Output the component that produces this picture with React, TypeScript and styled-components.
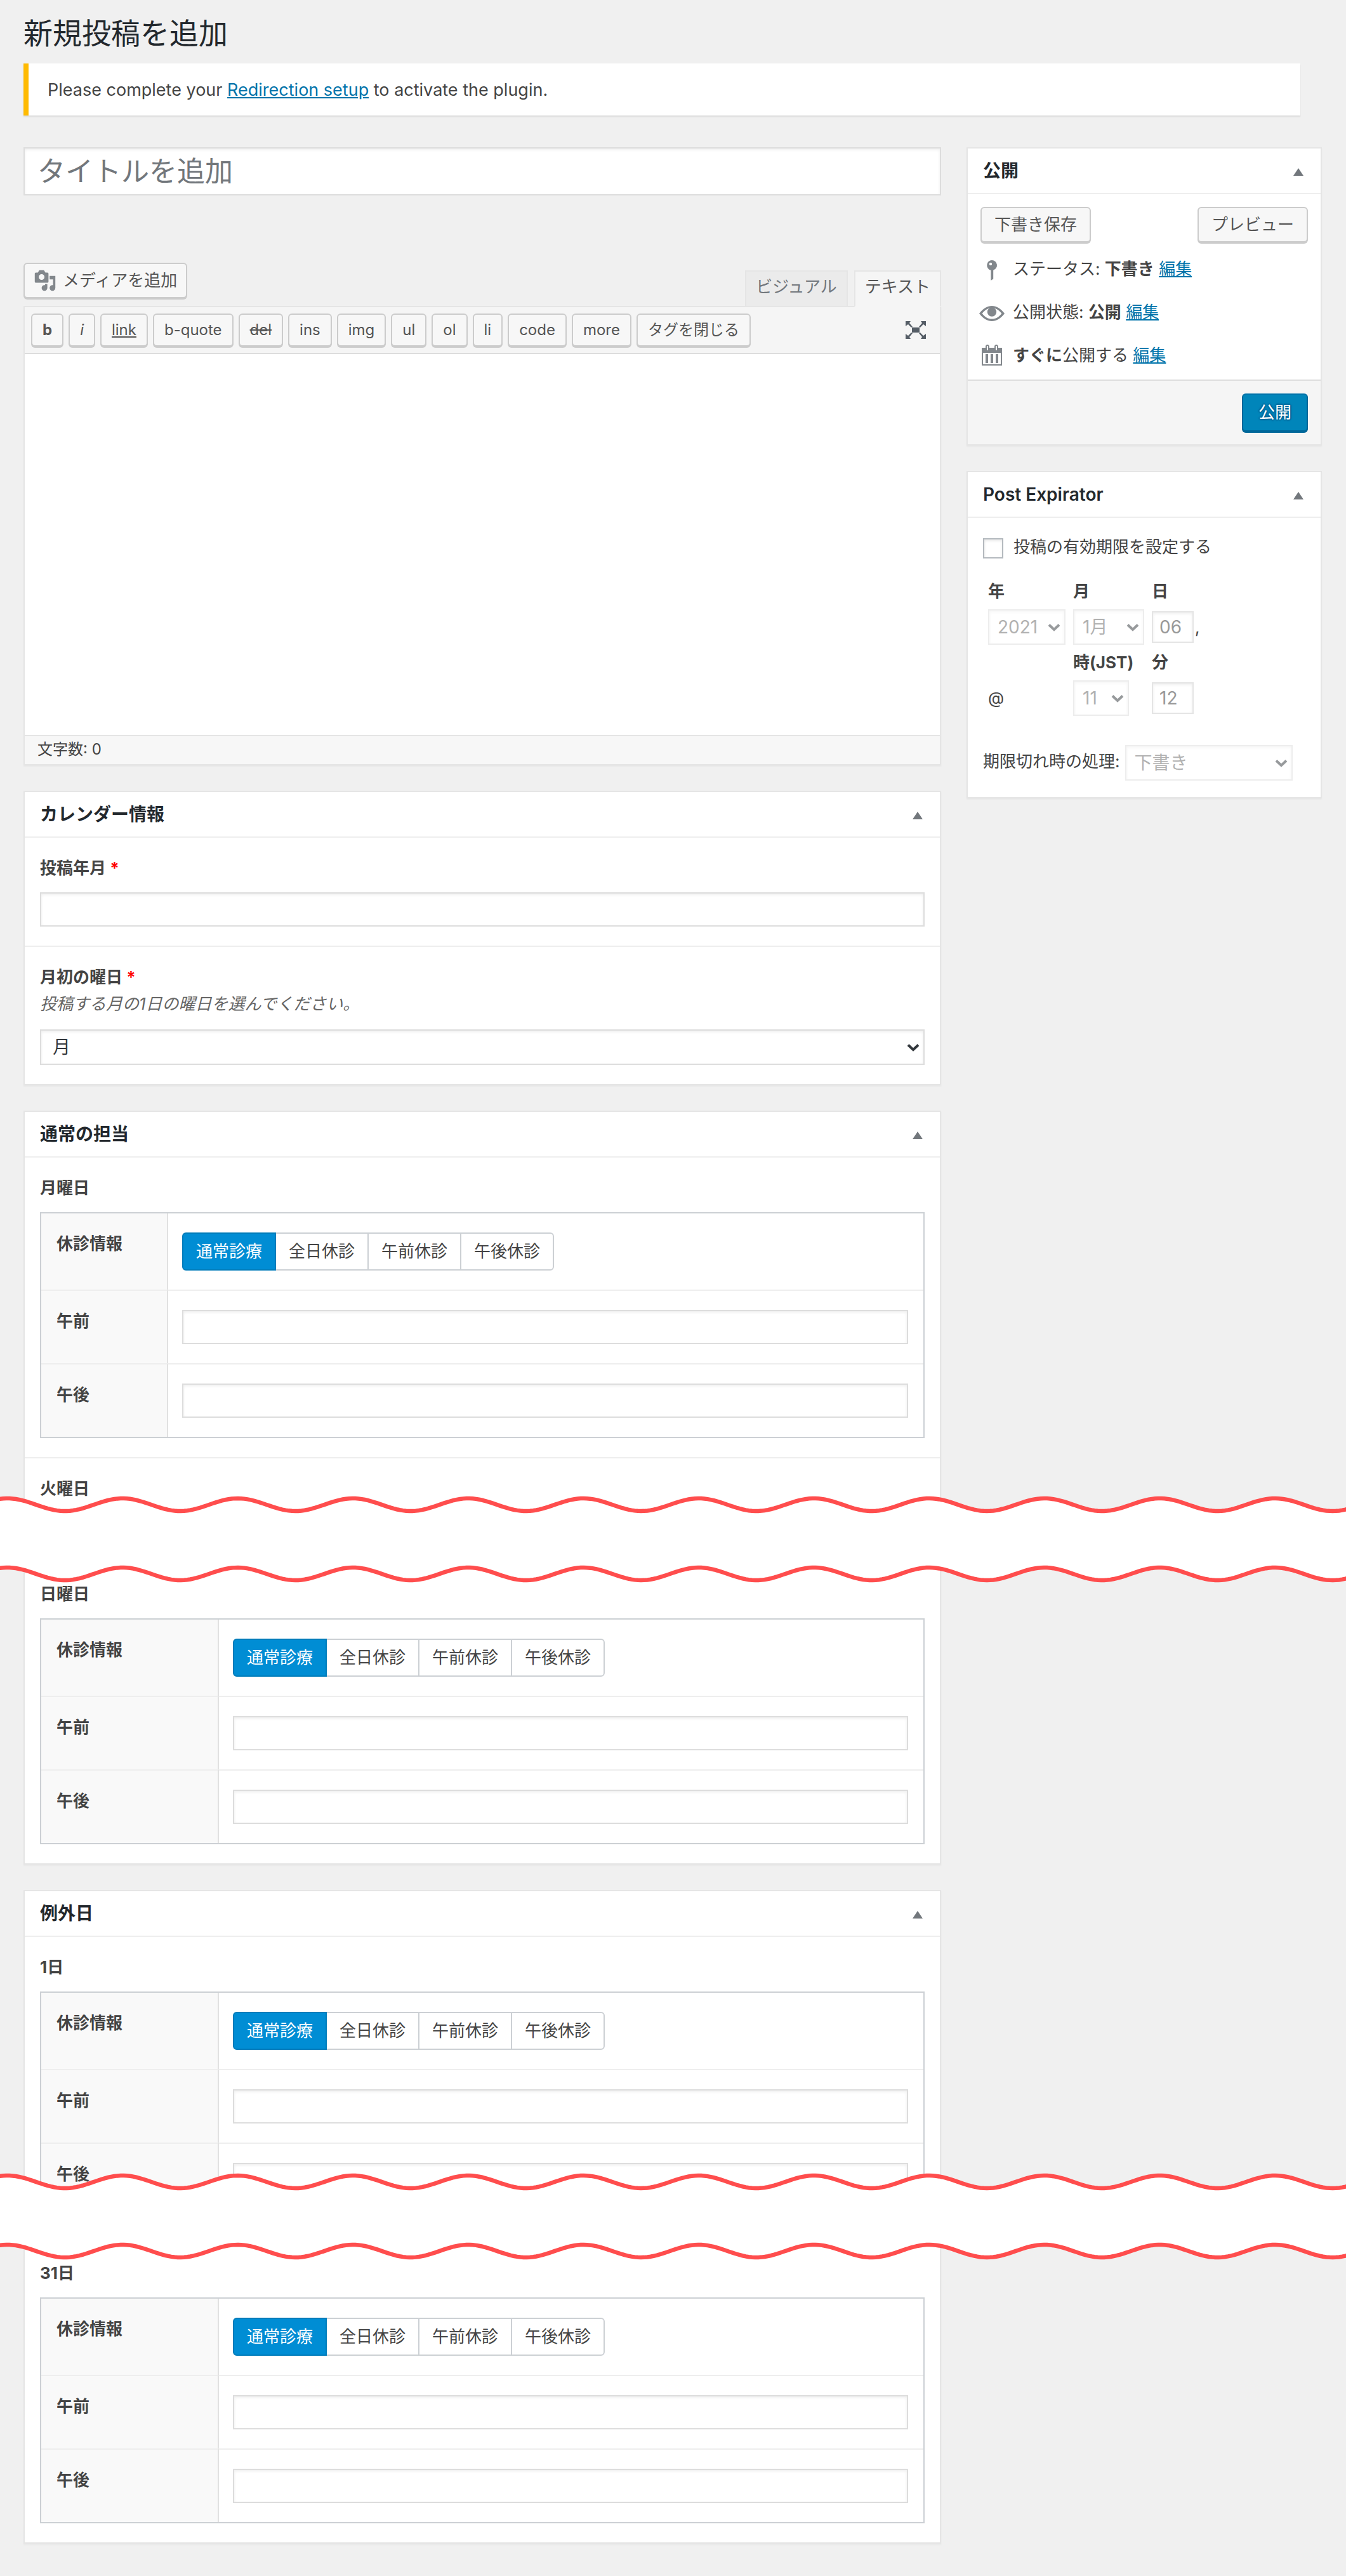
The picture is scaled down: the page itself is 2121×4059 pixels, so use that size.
import React, { useId } from 'react';
import styled, { createGlobalStyle, css } from 'styled-components';

const GlobalStyle = createGlobalStyle`
  *, *::before, *::after { box-sizing: border-box; }
  body {
    margin: 0;
    background: #f0f0f0;
    color: #444;
    font: 26px/36px Inter, "Noto Sans CJK JP", sans-serif;
  }
  input, select, button, textarea { font-family: inherit; margin: 0; }
`;

const Page = styled.div`
  overflow: hidden;
  padding-bottom: 51px;
`;

const Slice = styled.div`
  padding: 0 38px 0 37px;
`;

const Columns = styled.div`
  display: grid;
  grid-template-columns: minmax(0, 1fr) 560px;
  gap: 40px;
  align-items: start;
`;

const Heading = styled.h1`
  margin: 0;
  padding: 22px 0 18px;
  font-size: 46px;
  line-height: 60px;
  font-weight: 400;
  color: #23282d;
`;

const Notice = styled.div`
  margin: 0 34px 50px 0;
  padding: 24px 30px 22px;
  border-left: 8px solid #ffba00;
  background: #fff;
  box-shadow: 0 2px 2px rgba(0, 0, 0, 0.1);
  font-size: 27px;
`;

const Link = styled.a`
  color: #0073aa;
  text-decoration: underline;
`;

const fieldFrame = css`
  border: 2px solid #ddd;
  border-radius: 0;
  background: #fff;
  box-shadow: inset 0 2px 4px rgba(0, 0, 0, 0.07);
  color: #32373c;
`;

const TitleInput = styled.input`
  ${fieldFrame}
  display: block;
  width: 100%;
  height: 76px;
  padding: 0 20px;
  font-size: 44px;
  &::placeholder { color: #72777c; opacity: 1; }
`;

const TextInput = styled.input`
  ${fieldFrame}
  display: block;
  width: 100%;
  height: 54px;
  padding: 0 14px;
  font-size: 28px;
`;

const EditorTools = styled.div`
  display: flex;
  justify-content: space-between;
  align-items: flex-start;
  margin-top: 106px;
`;

const Button = styled.button<{ $primary?: boolean }>`
  height: 56px;
  padding: 0 20px;
  border: 2px solid #ccc;
  border-radius: 6px;
  background: #f7f7f7;
  box-shadow: 0 2px 0 #ccc;
  color: #555;
  font-size: 26px;
  line-height: 50px;
  white-space: nowrap;
  ${(p) =>
    p.$primary &&
    css`
      height: 60px;
      padding: 0 24px;
      border-color: #0073aa #006799 #006799;
      background: #0085ba;
      box-shadow: 0 2px 0 #006799;
      color: #fff;
      text-shadow: 0 -2px 2px #006799, 2px 0 2px #006799, 0 2px 2px #006799, -2px 0 2px #006799;
    `}
`;

const MediaButton = styled(Button)`
  display: flex;
  align-items: center;
  gap: 10px;
  padding: 0 14px;
`;

const Tabs = styled.div`
  display: flex;
  gap: 10px;
  padding-top: 12px;
`;

const Tab = styled.button<{ $active?: boolean }>`
  height: 58px;
  margin-bottom: -2px;
  padding: 0 15px 6px;
  border: 2px solid #e5e5e5;
  border-bottom-color: ${(p) => (p.$active ? '#f5f5f5' : '#e5e5e5')};
  background: ${(p) => (p.$active ? '#f5f5f5' : '#ebebeb')};
  color: ${(p) => (p.$active ? '#555' : '#72777c')};
  font-size: 26px;
  line-height: 36px;
  position: relative;
`;

const Editor = styled.div`
  border: 2px solid #e5e5e5;
  box-shadow: 0 2px 2px rgba(0, 0, 0, 0.04);
`;

const Toolbar = styled.div`
  display: flex;
  gap: 8px;
  height: 74px;
  padding: 10px 22px 0 10px;
  border-bottom: 2px solid #ddd;
  background: #f5f5f5;
`;

const TagButton = styled(Button)<{ $look?: string }>`
  height: 52px;
  padding: 0 16px;
  font-size: 24px;
  line-height: 46px;
  font-weight: ${(p) => (p.$look === 'bold' ? 700 : 400)};
  font-style: ${(p) => (p.$look === 'italic' ? 'italic' : 'normal')};
  text-decoration: ${(p) =>
    p.$look === 'underline' || p.$look === 'line-through' ? p.$look : 'none'};
`;

const IconButton = styled.button`
  display: flex;
  align-items: center;
  justify-content: center;
  padding: 0;
  border: 0;
  background: none;
`;

const ToggleButton = styled(IconButton)`
  padding-top: 4px;
`;

const FullscreenButton = styled(IconButton)`
  height: 52px;
  margin-left: auto;
`;

const TextArea = styled.textarea`
  display: block;
  width: 100%;
  height: 600px;
  padding: 20px;
  border: 0;
  resize: none;
  background: #fff;
  color: #32373c;
  font-size: 26px;
`;

const StatusBar = styled.div`
  height: 46px;
  padding: 0 20px;
  border-top: 2px solid #e5e5e5;
  background: #f7f7f7;
  font-size: 24px;
  line-height: 42px;
`;

const Box = styled.section<{ $cut?: 'top' | 'bottom' }>`
  border: 2px solid #e5e5e5;
  border-top-width: ${(p) => (p.$cut === 'top' ? 0 : 2)}px;
  border-bottom-width: ${(p) => (p.$cut === 'bottom' ? 0 : 2)}px;
  background: #fff;
  box-shadow: 0 2px 2px rgba(0, 0, 0, 0.04);
  & + & { margin-top: 40px; }
  ${Editor} + & { margin-top: 40px; }
`;

const BoxHeader = styled.header`
  display: flex;
  align-items: center;
  justify-content: space-between;
  height: 72px;
  padding: 0 27px 0 24px;
  border-bottom: 2px solid #eee;
`;

const BoxTitle = styled.h2`
  margin: 0;
  font-size: 28px;
  line-height: 40px;
  font-weight: 600;
  color: #23282d;
`;

const Field = styled.div<{ $flush?: boolean }>`
  padding: ${(p) => (p.$flush ? '30px 24px 0' : '30px 24px')};
  & + & { border-top: 2px solid #eee; }
`;

const FieldLabel = styled.label`
  display: block;
  font-weight: 700;
`;

const FieldName = styled.div`
  font-weight: 700;
`;

const Required = styled.span`
  color: #f00;
`;

const Description = styled.p`
  margin: 0;
  padding: 6px 0 2px;
  color: #666;
  font-style: italic;
`;

const FieldControl = styled.div`
  padding-top: 20px;
`;

const SelectWrap = styled.div<{ $width?: string; $off?: boolean }>`
  position: relative;
  width: ${(p) => p.$width ?? '100%'};
  opacity: ${(p) => (p.$off ? 0.5 : 1)};
  svg {
    position: absolute;
    right: 8px;
    top: 22px;
    pointer-events: none;
  }
`;

const NativeSelect = styled.select<{ $off?: boolean }>`
  ${fieldFrame}
  display: block;
  width: 100%;
  height: 56px;
  padding: 0 36px 0 ${(p) => (p.$off ? 13 : 18)}px;
  appearance: none;
  font-size: 28px;
  color: ${(p) => (p.$off ? '#666' : '#32373c')};
  opacity: 1;
`;

const Rows = styled.table`
  width: 100%;
  margin-top: 20px;
  border: 2px solid #ccd0d4;
  border-spacing: 0;
  table-layout: fixed;
`;

const RowHead = styled.th<{ $width: number }>`
  width: ${(p) => p.$width}px;
  padding: 30px 24px;
  border-right: 2px solid #e1e1e1;
  background: #f9f9f9;
  text-align: left;
  vertical-align: top;
  font-weight: 700;
  tr + tr > & { border-top: 2px solid #eee; }
`;

const RowCell = styled.td`
  padding: 30px 24px 30px 22px;
  vertical-align: top;
  tr + tr > & { border-top: 2px solid #eee; }
`;

const Choices = styled.div`
  display: flex;
`;

const Choice = styled.label`
  display: block;
  height: 60px;
  margin-left: -2px;
  padding: 0 20px;
  border: 2px solid #ccd0d4;
  line-height: 56px;
  white-space: nowrap;
  &:first-child { margin-left: 0; border-radius: 6px 0 0 6px; }
  &:last-child { border-radius: 0 6px 6px 0; }
  &:has(input:checked) {
    z-index: 1;
    border-color: #007cba;
    background: #008dd4;
    color: #fff;
  }
  input {
    appearance: none;
    position: absolute;
    width: 0;
    height: 0;
  }
`;

const Actions = styled.div`
  display: flex;
  justify-content: space-between;
  padding: 20px 20px 8px;
`;

const StatusList = styled.ul`
  list-style: none;
  margin: 0;
  padding: 0 18px 4px;
`;

const StatusItem = styled.li`
  display: flex;
  align-items: center;
  gap: 13px;
  height: 68px;
`;

const BoxFooter = styled.footer`
  display: flex;
  justify-content: flex-end;
  padding: 20px;
  border-top: 2px solid #ddd;
  background: #f5f5f5;
`;

const Expirator = styled.div`
  padding: 28px 24px 26px;
`;

const CheckLabel = styled.label`
  display: flex;
  align-items: flex-start;
  gap: 16px;
`;

const CheckBox = styled.input`
  appearance: none;
  width: 32px;
  height: 32px;
  margin-top: 4px !important;
  border: 2px solid #b4b9be;
  background: #fff;
  box-shadow: inset 0 2px 4px rgba(0, 0, 0, 0.1);
`;

const DateGrid = styled.div`
  display: grid;
  grid-template-columns: 122px 112px 1fr;
  grid-template-rows: 36px 56px 36px 56px;
  gap: 10px 12px;
  align-items: center;
  margin: 34px 0 46px;
  padding-left: 8px;
`;

const DateLabel = styled.label`
  font-weight: 700;
  white-space: nowrap;
`;

const SmallInput = styled.input`
  ${fieldFrame}
  width: 66px;
  height: 50px;
  margin-right: 2px !important;
  padding: 0 10px;
  font-size: 28px;
  color: #999;
  border-color: #e5e5e5;
`;

const ActionRow = styled.div`
  display: flex;
  align-items: center;
  gap: 8px;
  white-space: nowrap;
  label { padding-bottom: 4px; }
`;

const TearBand = styled.svg<{ $before: number; $after: number }>`
  display: block;
  position: relative;
  z-index: 2;
  width: 100%;
  margin-top: ${(p) => -p.$before}px;
  margin-bottom: ${(p) => -p.$after}px;
`;

/* Torn-paper break: two parallel sine edges with white between them. */
const PERIOD = 181.6;
const CREST = 11.5;
const GAP = 109;
const wavePoints = (mid: number) => {
  const points: string[] = [];
  for (let x = -10; x <= 4000; x += 5) {
    const y = mid - 10 * Math.cos((2 * Math.PI * (x - CREST)) / PERIOD);
    points.push(`${x} ${y.toFixed(2)}`);
  }
  return points;
};

function Tear({ before, after }: { before: number; after: number }) {
  const top = wavePoints(14);
  const bottom = wavePoints(14 + GAP);
  return (
    <TearBand height={28 + GAP} $before={before} $after={after} aria-hidden="true">
      <path d={`M${top.join('L')}L${[...bottom].reverse().join('L')}Z`} fill="#fff" />
      <path d={`M${top.join('L')}`} fill="none" stroke="#ff4d4d" strokeWidth="6.5" />
      <path d={`M${bottom.join('L')}`} fill="none" stroke="#ff4d4d" strokeWidth="6.5" />
    </TearBand>
  );
}

const Triangle = () => (
  <svg width="16" height="12" viewBox="0 0 16 12" aria-hidden="true">
    <path d="M8 0l8 12H0z" fill="#72777c" />
  </svg>
);

const Chevron = () => (
  <svg width="20" height="14" viewBox="0 0 20 14" aria-hidden="true">
    <path d="M2 2.500l8 7.500 8-7.500" fill="none" stroke="#32373c" strokeWidth="4" />
  </svg>
);

const MediaIcon = () => (
  <svg width="36" height="36" viewBox="0 0 20 20" fill="#82878c" aria-hidden="true">
    <path d="M13 11V4c0-.55-.45-1-1-1h-1.670L9 1H5L3.670 3H2c-.55 0-1 .45-1 1v7c0 .55.45 1 1 1h10c.55 0 1-.45 1-1zM7 4.500c1.380 0 2.500 1.120 2.500 2.500S8.380 9.500 7 9.500 4.500 8.380 4.500 7 5.620 4.500 7 4.500zM14 6h5v10.500c0 1.380-1.120 2.500-2.500 2.500S14 17.880 14 16.500s1.120-2.500 2.500-2.500c.17 0 .34.020.5.050V9h-3V6zm-4 8.050V13h2v3.500c0 1.380-1.120 2.500-2.500 2.500S7 17.880 7 16.500 8.120 14 9.500 14c.17 0 .34.020.5.050z" />
  </svg>
);

const PinIcon = () => (
  <svg width="40" height="40" viewBox="0 0 20 20" fill="#82878c" aria-hidden="true">
    <path d="M10 3a4 4 0 0 1 1.100 7.850V17.800L9.200 19V10.900A4 4 0 0 1 10 3zM9 4.900a1.100 1.100 0 1 0 0 2.200 1.100 1.100 0 0 0 0-2.200z" fillRule="evenodd" />
  </svg>
);

const EyeIcon = () => (
  <svg width="40" height="40" viewBox="0 0 20 20" fill="#82878c" aria-hidden="true">
    <path d="M0 11C3 7 6.500 5 10 5s7 2 10 6c-3 4-6.500 6-10 6s-7-2-10-6zm2.300 0c2.200 2.900 4.800 4.300 7.700 4.300s5.500-1.400 7.700-4.300C15.500 8 12.900 6.600 10 6.600S4.500 8 2.300 11z" fillRule="evenodd" />
    <circle cx="10" cy="9.800" r="3.600" />
  </svg>
);

const CalendarIcon = () => (
  <svg width="40" height="40" viewBox="0 0 20 20" fill="#82878c" aria-hidden="true">
    <path d="M15 4h3v14H2V4h3V3c0-.83.67-1.500 1.500-1.500S8 2.170 8 3v1h4V3c0-.83.67-1.500 1.500-1.500S15 2.170 15 3v1zM6 3v2.500c0 .28.22.5.5.5s.5-.22.5-.5V3c0-.28-.22-.5-.5-.5S6 2.720 6 3zm7 0v2.500c0 .28.22.5.5.5s.5-.22.5-.5V3c0-.28-.22-.5-.5-.5s-.5.22-.5.5zm4 14V8H3v9h14zM7 9v7H5V9h2zm4 0v7H9V9h2zm4 0v7h-2V9h2z" />
  </svg>
);

const FullscreenIcon = () => (
  <svg width="32" height="28" viewBox="0 0 32 28" fill="#555d66" aria-hidden="true">
    <path d="M10 10h12v8H10zM0 0h8L6 3l5 6-2 1-5-5-4 3zM32 0h-8l2 3-5 6 2 1 5-5 4 3zM0 28h8l-2-3 5-6-2-1-5 5-4-3zM32 28h-8l2-3-5-6 2-1 5 5 4-3z" />
  </svg>
);

function Select({ id, value, width, off }: {
  id: string; value: string; width?: string; off?: boolean;
}) {
  return (
    <SelectWrap $width={width} $off={off}>
      <NativeSelect id={id} disabled={off} $off={off}>
        <option>{value}</option>
      </NativeSelect>
      <Chevron />
    </SelectWrap>
  );
}

function BoxHead({ title }: { title: string }) {
  return (
    <BoxHeader>
      <BoxTitle>{title}</BoxTitle>
      <ToggleButton type="button" aria-label={title}><Triangle /></ToggleButton>
    </BoxHeader>
  );
}

const CHOICES = ['通常診療', '全日休診', '午前休診', '午後休診'];

function DayField({ name, head = 280, flush }: { name: string; head?: number; flush?: boolean }) {
  const id = useId();
  return (
    <Field $flush={flush}>
      <FieldName>{name}</FieldName>
      <Rows>
        <tbody>
          <tr>
            <RowHead $width={head} scope="row">休診情報</RowHead>
            <RowCell>
              <Choices role="radiogroup" aria-label="休診情報">
                {CHOICES.map((c, i) => (
                  <Choice key={c}>
                    <input type="radio" name={id} defaultChecked={i === 0} />
                    {c}
                  </Choice>
                ))}
              </Choices>
            </RowCell>
          </tr>
          {['午前', '午後'].map((part) => (
            <tr key={part}>
              <RowHead $width={head} scope="row">
                <label htmlFor={id + part}>{part}</label>
              </RowHead>
              <RowCell><TextInput id={id + part} type="text" /></RowCell>
            </tr>
          ))}
        </tbody>
      </Rows>
    </Field>
  );
}

const TAGS: [string, string?][] = [
  ['b', 'bold'], ['i', 'italic'], ['link', 'underline'], ['b-quote'], ['del', 'line-through'],
  ['ins'], ['img'], ['ul'], ['ol'], ['li'], ['code'], ['more'], ['タグを閉じる'],
];

function PublishBox() {
  return (
    <Box>
      <BoxHead title="公開" />
      <Actions>
        <Button type="button">下書き保存</Button>
        <Button type="button">プレビュー</Button>
      </Actions>
      <StatusList>
        <StatusItem>
          <PinIcon />
          <span>ステータス: <b>下書き</b> <Link href="#status">編集</Link></span>
        </StatusItem>
        <StatusItem>
          <EyeIcon />
          <span>公開状態: <b>公開</b> <Link href="#visibility">編集</Link></span>
        </StatusItem>
        <StatusItem>
          <CalendarIcon />
          <span><b>すぐに</b>公開する <Link href="#schedule">編集</Link></span>
        </StatusItem>
      </StatusList>
      <BoxFooter>
        <Button type="submit" $primary>公開</Button>
      </BoxFooter>
    </Box>
  );
}

function ExpiratorBox() {
  return (
    <Box>
      <BoxHead title="Post Expirator" />
      <Expirator>
        <CheckLabel>
          <CheckBox type="checkbox" />
          投稿の有効期限を設定する
        </CheckLabel>
        <DateGrid>
          <DateLabel htmlFor="year">年</DateLabel>
          <DateLabel htmlFor="month">月</DateLabel>
          <DateLabel htmlFor="day">日</DateLabel>
          <Select id="year" value="2021" off />
          <Select id="month" value="1月" off />
          <span><SmallInput id="day" defaultValue="06" disabled />,</span>
          <span />
          <DateLabel htmlFor="hour">時(JST)</DateLabel>
          <DateLabel htmlFor="minute">分</DateLabel>
          <span>@</span>
          <Select id="hour" value="11" width="88px" off />
          <span><SmallInput id="minute" defaultValue="12" disabled /></span>
        </DateGrid>
        <ActionRow>
          <label htmlFor="expire">期限切れ時の処理:</label>
          <Select id="expire" value="下書き" width="264px" off />
        </ActionRow>
      </Expirator>
    </Box>
  );
}

export default function App() {
  return (
    <Page>
      <GlobalStyle />
      <Slice>
        <Heading>新規投稿を追加</Heading>
        <Notice>
          Please complete your <Link href="#setup">Redirection setup</Link> to activate the plugin.
        </Notice>
        <Columns>
          <main>
            <TitleInput type="text" placeholder="タイトルを追加" aria-label="タイトルを追加" />
            <EditorTools>
              <MediaButton type="button"><MediaIcon />メディアを追加</MediaButton>
              <Tabs>
                <Tab type="button">ビジュアル</Tab>
                <Tab type="button" $active>テキスト</Tab>
              </Tabs>
            </EditorTools>
            <Editor>
              <Toolbar>
                {TAGS.map(([t, look]) => (
                  <TagButton key={t} type="button" $look={look}>{t}</TagButton>
                ))}
                <FullscreenButton type="button" aria-label="全画面"><FullscreenIcon /></FullscreenButton>
              </Toolbar>
              <TextArea aria-label="本文" />
              <StatusBar>文字数: 0</StatusBar>
            </Editor>
            <Box>
              <BoxHead title="カレンダー情報" />
              <Field>
                <FieldLabel htmlFor="ym">投稿年月 <Required>*</Required></FieldLabel>
                <FieldControl><TextInput id="ym" type="text" /></FieldControl>
              </Field>
              <Field>
                <FieldLabel htmlFor="first">月初の曜日 <Required>*</Required></FieldLabel>
                <Description>投稿する月の1日の曜日を選んでください。</Description>
                <FieldControl><Select id="first" value="月" /></FieldControl>
              </Field>
            </Box>
            <Box $cut="bottom">
              <BoxHead title="通常の担当" />
              <DayField name="月曜日" head={200} />
              <Field $flush>
                <FieldName>火曜日</FieldName>
                <FieldControl />
              </Field>
            </Box>
          </main>
          <aside>
            <PublishBox />
            <ExpiratorBox />
          </aside>
        </Columns>
      </Slice>
      <Tear before={27} after={30} />
      <Slice>
        <Columns>
          <div>
            <Box $cut="top">
              <DayField name="日曜日" />
            </Box>
            <Box $cut="bottom">
              <BoxHead title="例外日" />
              <DayField name="1日" flush />
            </Box>
          </div>
        </Columns>
      </Slice>
      <Tear before={70} after={27} />
      <Slice>
        <Columns>
          <Box $cut="top">
            <DayField name="31日" />
          </Box>
        </Columns>
      </Slice>
    </Page>
  );
}
